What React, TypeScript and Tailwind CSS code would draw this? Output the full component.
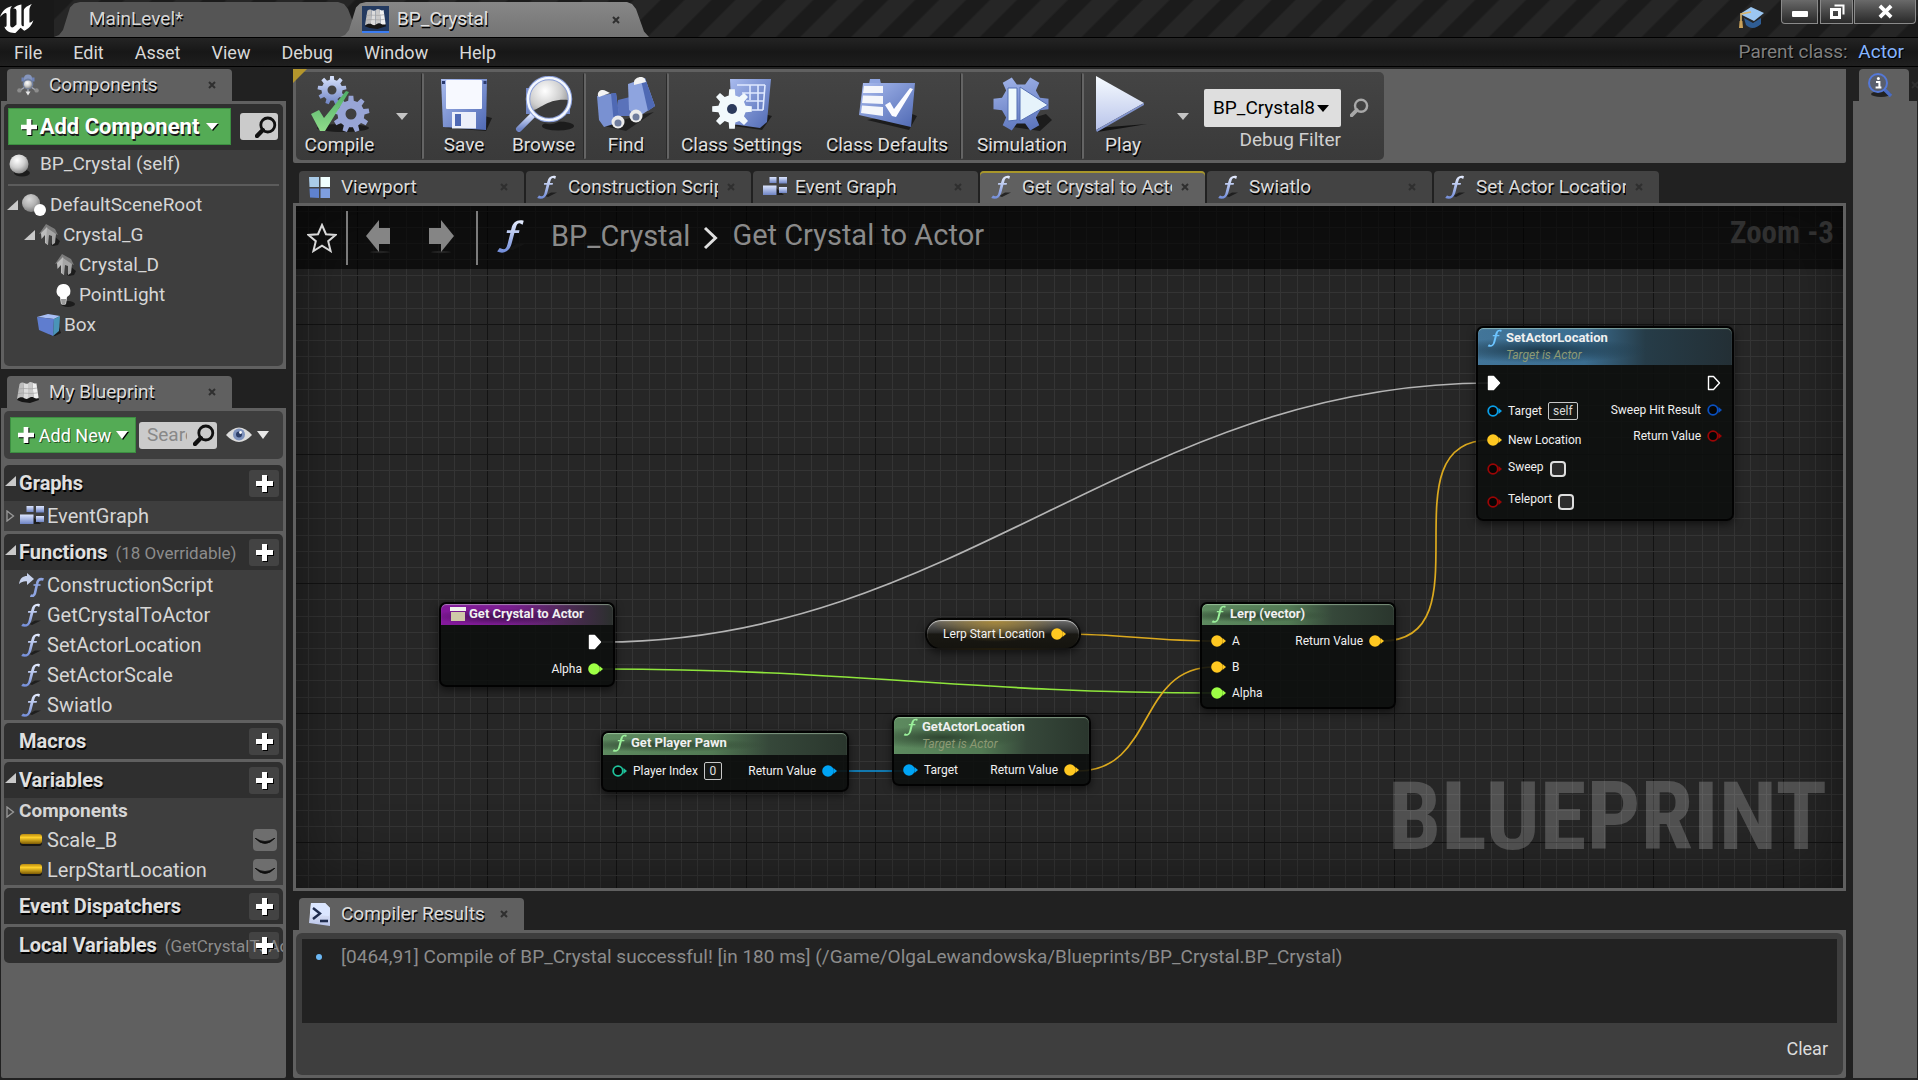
import React from "react";
import type { ReactNode } from "react";

/* ---------- icon helpers ---------- */

function gearPath(cx: number, cy: number, outer: number, inner: number, teeth: number) {
  const step = (Math.PI * 2) / teeth;
  const points: string[] = [];
  for (let i = 0; i < teeth; i++) {
    const a = i * step - Math.PI / 2;
    const add = (r: number, o: number) =>
      points.push(`${(cx + r * Math.cos(a + o * step)).toFixed(2)} ${(cy + r * Math.sin(a + o * step)).toFixed(2)}`);
    add(inner, -0.3);
    add(outer, -0.18);
    add(outer, 0.18);
    add(inner, 0.3);
  }
  return `M${points.join("L")}Z`;
}

function Gradients() {
  return (
    <svg className="absolute h-0 w-0" aria-hidden="true">
      <defs>
        <linearGradient id="steel" x1="0" y1="0" x2="0" y2="1">
          <stop offset="0" stopColor="#dbe5ff" />
          <stop offset="1" stopColor="#6f84c4" />
        </linearGradient>
        <linearGradient id="blue" x1="0" y1="0" x2="1" y2="1">
          <stop offset="0" stopColor="#a9bbee" />
          <stop offset="1" stopColor="#4f69b4" />
        </linearGradient>
        <linearGradient id="ice" x1="0" y1="0" x2="0" y2="1">
          <stop offset="0" stopColor="#f6fbff" />
          <stop offset="1" stopColor="#b9c4ea" />
        </linearGradient>
        <linearGradient id="fglyph" x1="0" y1="0" x2="0" y2="24" gradientUnits="userSpaceOnUse">
          <stop offset="0" stopColor="#eaf0ff" />
          <stop offset="1" stopColor="#6f8ad8" />
        </linearGradient>
        <linearGradient id="green" x1="0" y1="0" x2="0" y2="1">
          <stop offset="0" stopColor="#4fae68" />
          <stop offset="1" stopColor="#8fdc8a" />
        </linearGradient>
        <linearGradient id="gold" x1="0" y1="0" x2="0" y2="1">
          <stop offset="0" stopColor="#b98a10" />
          <stop offset="0.35" stopColor="#ffd02a" />
          <stop offset="1" stopColor="#7d5c06" />
        </linearGradient>
        <radialGradient id="ball" cx="0.4" cy="0.3" r="0.8">
          <stop offset="0" stopColor="#ffffff" />
          <stop offset="0.5" stopColor="#cfcfcf" />
          <stop offset="1" stopColor="#777777" />
        </radialGradient>
      </defs>
    </svg>
  );
}

function FIcon({ className = "h-6 w-6", color = "url(#fglyph)", shadow = true }: { className?: string; color?: string; shadow?: boolean }) {
  return (
    <svg viewBox="0 0 24 24" className={`shrink-0 ${className}`} fill="none" aria-hidden="true">
      {shadow && <path d="M10 21 L16 17.5 L22 17.5 L13 22 Z" fill="#161616" opacity="0.8" />}
      <path
        d="M21 1.2 C16.5 0 13.4 2.2 12.4 6.4 L12 8 H9.2 L8.9 9.8 H11.6 L9.6 17.6 C8.9 20.6 7.8 21.7 6 21.2 L4 20.4 L2.2 23 C6.8 25 10.8 23.2 12.4 17.4 L14.4 9.8 H17.6 L18 8 H14.9 L15.4 6.2 C16 3.6 16.9 2.8 18.2 3 L20.2 4 Z"
        fill={color}
      />
    </svg>
  );
}

function BookIcon({ className = "h-6 w-6" }: { className?: string }) {
  return (
    <svg viewBox="0 0 24 24" className={`shrink-0 ${className}`} aria-hidden="true">
      <path d="M1 20 L6 22 L14 23 L23 20 L22 17 H3 Z" fill="#161616" />
      <path d="M3.5 4 C5 2.4 6.5 2.2 8 3 L7.2 17.6 C5 17 3 17.6 1 19 Z" fill="#bdbdbd" />
      <path d="M8 3 C9.5 4 11 4 12 3.4 L12 18.6 C10.4 19.4 8.6 18.6 7.2 17.6 Z" fill="#dcdcdc" />
      <path d="M12 3.4 C13.5 1.8 15 1.6 16.4 2.6 L17.6 17.4 C15.6 16.6 13.6 17.4 12 18.6 Z" fill="#c9c9c9" />
      <path d="M16.4 2.6 C18 3.6 19 3.8 20.4 3.2 L22.6 18 C20.8 18.8 19 18.2 17.6 17.4 Z" fill="#f0f0f0" />
      <path d="M2.6 9 C8 7.4 14 10 21 8 M2 13.6 C8 12 14 14.6 21.8 12.8" stroke="#a2a2a2" strokeWidth="0.7" fill="none" />
    </svg>
  );
}

function ComponentsIcon() {
  return (
    <svg viewBox="0 0 24 24" className="h-6 w-6 shrink-0" aria-hidden="true">
      <path d="M12 12 L3 18 M12 12 L21 18 M12 12 V21" stroke="#a4a9b4" strokeWidth="1.5" />
      <path d="M5.5 4.5 H9 V8.5 H5.5 Z M15 4.5 H18.5 V8.5 H15 Z" fill="#6f83b8" />
      <circle cx="12" cy="5.5" r="4" fill="#8696bd" />
      <circle cx="12" cy="11" r="5.4" fill="#6f7f9f" />
      <circle cx="12" cy="11.5" r="4" fill="url(#ball)" />
      <circle cx="3.4" cy="17.4" r="2.2" fill="#8d8d8d" />
      <circle cx="20.6" cy="17.4" r="2.2" fill="#8d8d8d" />
      <path d="M9.5 18.5 H14.5 L12 22.5 Z" fill="#e8e8e8" />
    </svg>
  );
}

function GraphIcon() {
  return (
    <svg viewBox="0 0 26 24" className="h-6 w-[26px] shrink-0" aria-hidden="true">
      <path d="M14 13 L22 20 H12 Z" fill="#1c1c1c" />
      <rect x="7.5" y="2" width="7" height="6" fill="url(#steel)" />
      <rect x="17" y="2" width="8" height="6.5" fill="url(#steel)" />
      <rect x="1" y="10.5" width="13.5" height="9.5" fill="url(#steel)" />
      <rect x="17" y="12" width="8" height="6" fill="url(#steel)" />
    </svg>
  );
}

function ViewportIcon() {
  return (
    <svg viewBox="0 0 24 24" className="h-6 w-6 shrink-0" aria-hidden="true">
      <path d="M1 2 L11 2 V12 H1.5 Z" fill="#a9cbe8" />
      <path d="M12.5 2 H22 V12 H12.5 Z" fill="#f0ffff" />
      <path d="M1.5 13.5 H11 V23 L2 22.5 Z" fill="#5f82cf" />
      <path d="M12.5 13.5 H22 V23 H12.5 Z" fill="#7f9fe0" />
    </svg>
  );
}

function SearchGlyph({ className, color = "#111" }: { className: string; color?: string }) {
  return (
    <svg viewBox="0 0 22 22" className={`shrink-0 ${className}`} fill="none" stroke={color} aria-hidden="true">
      <circle cx="12.8" cy="9" r="7" strokeWidth="2.8" />
      <path d="M7.8 14 L2 20" strokeWidth="4.4" strokeLinecap="round" />
    </svg>
  );
}

function Caret({ className = "h-[7px] w-3", color = "#e8e8e8" }: { className?: string; color?: string }) {
  return (
    <svg viewBox="0 0 12 7" className={`shrink-0 ${className}`} preserveAspectRatio="none" aria-hidden="true">
      <path d="M0 0 H12 L6 7 Z" fill={color} />
    </svg>
  );
}

function PlusGlyph({ className = "h-[17px] w-[17px]" }: { className?: string }) {
  return (
    <svg viewBox="0 0 17 17" className={`shrink-0 drop-shadow-[1px_1px_0_#000] ${className}`} aria-hidden="true">
      <path d="M6 0 H11 V6 H17 V11 H11 V17 H6 V11 H0 V6 H6 Z" fill="#fff" />
    </svg>
  );
}

function Arrow({ open }: { open: boolean }) {
  return (
    <svg viewBox="0 0 12 12" className="h-3 w-3 shrink-0" aria-hidden="true">
      {open ? <path d="M11 1 V11 H0 Z" fill="#c9c9c9" /> : <path d="M2 1 L8.5 6 L2 11 Z" fill="none" stroke="#9a9a9a" strokeWidth="1.3" />}
    </svg>
  );
}

/* ---------- toolbar icons ---------- */

function CompileIcon() {
  return (
    <svg viewBox="0 0 60 56" className="h-14 w-[60px]" aria-hidden="true">
      <ellipse cx="33" cy="52" rx="26" ry="4" fill="#1c1c1c" />
      <path d={gearPath(22, 14, 14.5, 10.5, 9) + "M26.5 14a4.5 4.5 0 1 0-9 0a4.5 4.5 0 1 0 9 0Z"} fillRule="evenodd" fill="url(#steel)" />
      <path d={gearPath(41, 38, 18.5, 13.5, 9) + "M46.5 38a5.5 5.5 0 1 0-11 0a5.5 5.5 0 1 0 11 0Z"} fillRule="evenodd" fill="#98a5d6" />
      <path d="M1 38 L9 34 L14 42 L36 15 L39 16 L15 55 L10 55 Z" fill="url(#green)" />
    </svg>
  );
}

function SaveIcon() {
  return (
    <svg viewBox="0 0 60 56" className="h-14 w-[60px]" aria-hidden="true">
      <path d="M12 52 L52 55 L58 42 L50 40 Z" fill="#1c1c1c" />
      <path d="M7 3 H53 L52 54 L9 51 Z" fill="url(#blue)" />
      <rect x="12" y="4" width="36" height="29" rx="1" fill="#f7f9ff" />
      <rect x="18" y="36" width="24" height="16.5" fill="#eceffa" />
      <rect x="21" y="38" width="6" height="12" fill="#4f69b4" />
      <rect x="8" y="5" width="3" height="3" fill="#2b3a6e" />
      <rect x="49.5" y="5" width="3" height="3" fill="#2b3a6e" />
    </svg>
  );
}

function BrowseIcon() {
  return (
    <svg viewBox="0 0 60 56" className="h-14 w-[60px]" aria-hidden="true">
      <ellipse cx="44" cy="50" rx="16" ry="4.5" fill="#1c1c1c" />
      <rect x="12" y="12" width="44" height="26" fill="#7388c6" />
      <path d="M19 39 L5 53" stroke="url(#steel)" strokeWidth="6" strokeLinecap="round" />
      <circle cx="35" cy="23" r="20" fill="url(#ball)" />
      <path d="M17 34 C24 36 32 22 54 24 A19 19 0 0 1 17 34 Z" fill="#3a3a3a" />
      <circle cx="35" cy="23" r="21" fill="none" stroke="#8b9fd8" strokeWidth="4.5" />
      <circle cx="35" cy="23" r="21" fill="none" stroke="#f4f8ff" strokeWidth="2.5" />
    </svg>
  );
}

function FindIcon() {
  return (
    <svg viewBox="0 0 60 56" className="h-14 w-[60px]" aria-hidden="true">
      <path d="M8 50 L30 55 L58 36 L40 40 Z" fill="#222" />
      <path d="M22 24 L38 20 L38 40 L22 40 Z" fill="#5a72ba" />
      <path d="M1 20 L20 17 L24 46 L8 51 L3 44 Z" fill="#7991d2" />
      <path d="M32 8 L49 2 L59 30 L42 41 L33 34 Z" fill="#8ea4df" />
      <path d="M15 17.5 L20 17 L24 46 L18 48 Z" fill="#4f69b4" />
      <path d="M45 4 L49 2 L59 30 L52 35 Z" fill="#4f69b4" />
      <path d="M2 20 C1 14 7 13 10 15 L14 17 L3 21 Z" fill="#f3f3f3" />
      <path d="M38 6 C38 2 46 -1 49 3 L50 6 L38 9 Z" fill="#f3f3f3" />
      <circle cx="22" cy="46" r="6.5" fill="#ececec" />
      <circle cx="22" cy="47" r="3.5" fill="#707d9d" />
      <circle cx="40" cy="40" r="6.5" fill="#ececec" />
      <circle cx="40" cy="41" r="3.5" fill="#707d9d" />
    </svg>
  );
}

function ClassSettingsIcon() {
  return (
    <svg viewBox="0 0 60 56" className="h-14 w-[60px]" aria-hidden="true">
      <path d="M22 50 L50 54 L60 40 L52 38 Z" fill="#1c1c1c" />
      <path d="M18 3 H59 L55 46 L48 52 L20 48 Z" fill="url(#blue)" />
      <path d="M25 9 H53 M38 9 V24 M46 9 V34 M53 9 L51 34 M30 17 H53 M34 25 H52 M40 34 H51" stroke="#dfe9ff" strokeWidth="1.6" fill="none" />
      <path d={gearPath(20, 33, 20, 14, 8)} fill="#f2f9fc" />
      <circle cx="20" cy="33" r="5" fill="#2b3a5c" />
    </svg>
  );
}

function ClassDefaultsIcon() {
  return (
    <svg viewBox="0 0 60 56" className="h-14 w-[60px]" aria-hidden="true">
      <path d="M10 44 L52 54 L60 40 L50 36 Z" fill="#1c1c1c" />
      <path d="M13 3 H23 L24 8 H12 Z" fill="#8ea4df" />
      <path d="M6 7 H58 L54 51 L2 39 Z" fill="url(#blue)" />
      <path d="M7 10 L26 10 V17 L6 17 Z M6 19.5 L26 20 V28 L5 27 Z M5 29.5 L26 31 V40 L4 37 Z" fill="#f4f6fb" />
      <path d="M28 29 L33 26 L37 33 L53 12 L56 13 L39 41 L35 40 Z" fill="#fbfbff" />
    </svg>
  );
}

function SimulationIcon() {
  return (
    <svg viewBox="0 0 60 56" className="h-14 w-[60px]" aria-hidden="true">
      <path d="M14 50 L48 55 L60 44 L54 38 Z" fill="#1c1c1c" />
      <g transform="rotate(30 29 28)">
        <path d={gearPath(29, 28, 28, 20, 6)} fill="url(#blue)" />
      </g>
      <path d="M16 12 H25 V44 L16 45 Z" fill="#eef9fc" stroke="#5570b4" strokeWidth="1" />
      <path d="M28 11 L56 29 L28 45 Z" fill="#e6f3fb" stroke="#5570b4" strokeWidth="1" />
    </svg>
  );
}

function PlayIcon() {
  return (
    <svg viewBox="0 0 60 56" className="h-14 w-[60px]" aria-hidden="true">
      <path d="M4 56 L4 52 L54 48 L30 52 Z" fill="#141414" />
      <path d="M3 0 L51 27 L3 54 Z" fill="url(#ice)" />
      <path d="M3 54 L51 27 L51 29 L4 56 Z" fill="#8193cc" />
    </svg>
  );
}

/* ---------- shared chrome ---------- */

function CloseX({ label }: { label: string }) {
  return (
    <button aria-label={`Close ${label}`} className="flex h-4 w-[10px] shrink-0 items-center justify-center">
      <svg viewBox="0 0 8 8" className="h-2 w-2" aria-hidden="true">
        <path d="M1 1 L7 7 M7 1 L1 7" stroke="#2f2f2f" strokeWidth="2" />
      </svg>
    </button>
  );
}

function PanelTab({ icon, label, state = "open" }: { icon: ReactNode; label: string; state?: "open" | "idle" | "active" }) {
  const look =
    state === "idle"
      ? "bg-[#434343]"
      : state === "active"
        ? "bg-[#606060] shadow-[inset_0_2px_0_#a8962a]"
        : "bg-[#606060]";
  return (
    <div className={`flex h-8 w-[225px] shrink-0 items-center rounded-t-[4px] pr-[15px] pl-[9px] ${look}`}>
      <span className="flex w-[33px] shrink-0 items-center">{icon}</span>
      <button className="mr-2 min-w-0 flex-1 overflow-hidden text-left whitespace-nowrap text-[#dcdcdc] [text-shadow:1px_2px_0_#000]">
        {label}
      </button>
      <CloseX label={label} />
    </div>
  );
}

const menuItems = ["File", "Edit", "Asset", "View", "Debug", "Window", "Help"];

function TitleBar() {
  return (
    <header className="flex h-[37px] shrink-0 items-start bg-[repeating-linear-gradient(135deg,#1b1b1b_0px,#1b1b1b_15px,#262626_17px,#262626_34px,#1b1b1b_36px)]">
      <div className="flex h-full w-[54px] shrink-0 items-center bg-[#191919]">
        <svg viewBox="0 0 36 30" className="h-[30px] w-9" aria-label="Unreal Engine" role="img">
          <path
            d="M0 13 C2 7 6 3.5 12 2 C10.5 4 10.2 5 10.2 7 V21 C10.2 23 12 24.2 13.6 23 L16.5 20.4 V7 C16.5 4.6 14.8 4 13.2 4.6 C15.6 2.2 18.4 1 21.4 0.6 V19.6 C21.4 21.8 22.4 22.8 23.8 22 V7 C23.8 4.8 25.4 2.6 31.8 0 C29.6 3 29.4 4.6 29.4 7 V18.6 C30.8 18.6 32 17.8 33.4 16.2 C32 21.4 28.4 24.8 24.2 26.8 L20.6 23.8 L15.4 29 C10 29.4 5.4 27 4.4 22.6 C5.6 23.4 6.6 22.6 6.6 21 V10.4 C6.6 8.4 4.4 8 0 13 Z"
            fill="#fff"
          />
        </svg>
      </div>
      <div className="mt-[2px] flex h-[35px] w-[298px] items-center bg-[#555] pl-[35px] [clip-path:polygon(0_100%,5px_94%,9px_80%,16px_16%,20px_4%,26px_0,calc(100%-14px)_0,calc(100%-8px)_6%,calc(100%-4px)_20%,100%_50%,100%_100%)]">
        <button className="text-[#d6d6d6] [text-shadow:1px_2px_0_#000]">MainLevel*</button>
      </div>
      <div className="mt-[2px] -ml-3 flex h-[35px] w-[309px] items-center bg-linear-to-b from-[#878787] to-[#747474] pr-7 pl-[22px] [clip-path:polygon(0_100%,5px_94%,9px_80%,16px_16%,20px_4%,26px_0,calc(100%-22px)_0,calc(100%-17px)_6%,calc(100%-13px)_20%,calc(100%-5px)_84%,100%_100%)]">
        <span className="mr-2 flex border-b-2 border-[#3b7cf0] bg-[#233a60] p-[1px]">
          <BookIcon className="h-[23px] w-[25px]" />
        </span>
        <button className="flex-1 text-left text-[#e2e2e2] [text-shadow:1px_2px_0_#000]">BP_Crystal</button>
        <CloseX label="BP_Crystal" />
      </div>
      <div className="ml-auto flex items-start">
        <svg viewBox="0 0 28 24" className="mt-[6px] mr-4 h-6 w-7" aria-label="Tutorials" role="img">
          <path d="M7 12 L16 17 L24 12 V18 C20 22 14 24 9 19 Z" fill="#2f5d94" />
          <path d="M14 1 L27 7 L17 15 L3 8 Z" fill="#9cc7f2" />
          <path d="M14 6 L4 8 V20" stroke="#d8b36a" strokeWidth="1.6" fill="none" />
          <path d="M2.6 15 H5.4 L6 22 H2 Z" fill="#caa25a" />
        </svg>
        <div className="flex text-white">
          <button aria-label="Minimize" className="flex h-6 w-[37px] items-center justify-center rounded-bl-[4px] border border-t-0 border-[#8a8a8a] bg-linear-to-b from-[#6a6a6a] to-[#2a2a2a]">
            <span className="mt-1 h-[6px] w-4 rounded-[1px] bg-white" />
          </button>
          <button aria-label="Restore" className="ml-[2px] flex h-6 w-[33px] items-center justify-center border border-t-0 border-[#8a8a8a] bg-linear-to-b from-[#6a6a6a] to-[#2a2a2a]">
            <svg viewBox="0 0 16 16" className="h-4 w-4" fill="none" stroke="#fff" aria-hidden="true">
              <path d="M5.5 1.5 H14.5 V10.5" strokeWidth="2" />
              <rect x="2.5" y="5.5" width="8" height="8" strokeWidth="3" />
            </svg>
          </button>
          <button aria-label="Close" className="mr-[2px] ml-[1px] flex h-6 w-[62px] items-center justify-center rounded-br-[4px] border border-t-0 border-[#8a8a8a] bg-linear-to-b from-[#6a6a6a] to-[#2a2a2a]">
            <svg viewBox="0 0 16 16" className="h-[15px] w-[17px]" aria-hidden="true">
              <path d="M2 2 L14 14 M14 2 L2 14" stroke="#fff" strokeWidth="4" />
            </svg>
          </button>
        </div>
      </div>
    </header>
  );
}

function MenuBar() {
  return (
    <nav className="flex h-[30px] shrink-0 items-center gap-[31px] border-y border-black bg-linear-to-b from-[#242424] via-[#171717] to-[#1f1f1f] px-[14px] text-[18px] text-[#d8d8d8]">
      {menuItems.map((item) => (
        <button key={item}>{item}</button>
      ))}
      <span className="ml-auto text-[19px] text-[#808080] [text-shadow:1px_1px_0_#000]">
        Parent class:{" "}
        <a href="#actor" className="ml-[6px] text-[#85b5ff]">
          Actor
        </a>
      </span>
    </nav>
  );
}

/* ---------- left column ---------- */

function HouseIcon() {
  return (
    <svg viewBox="0 0 22 24" className="h-6 w-[22px] shrink-0" aria-hidden="true">
      <path d="M13 22 L17 14 L22 18 L20 22 L15 23 Z" fill="#1c1c1c" />
      <path d="M1 11 L8 1 L17 6 L20 12 L10 8 Z" fill="#7b7b7b" />
      <path d="M3 10 L9 4 L10 8 V22 L7 20 V12 L3.5 16 Z" fill="#bcbcbc" />
      <path d="M9 5 L18 11 L17 20 L14 22 V13 L11 12 L10 22 L8 20 Z" fill="#a5a5a5" />
    </svg>
  );
}

function SceneRootIcon() {
  return (
    <svg viewBox="0 0 26 24" className="h-6 w-[26px] shrink-0" aria-hidden="true">
      <circle cx="10" cy="10" r="9" fill="url(#ball)" opacity="0.8" />
      <circle cx="19" cy="17" r="6" fill="#fff" />
    </svg>
  );
}

function BulbIcon() {
  return (
    <svg viewBox="0 0 22 24" className="h-6 w-[22px] shrink-0" aria-hidden="true">
      <ellipse cx="14" cy="21" rx="7" ry="3" fill="#1c1c1c" />
      <path d="M9 1 A7 7 0 0 1 13 14 L12 21 H7 L6 14 A7 7 0 0 1 9 1 Z" fill="#fff" />
      <path d="M7 16 H12 L11.5 22 H7.5 Z" fill="#9a9a9a" />
    </svg>
  );
}

function BoxIcon() {
  return (
    <svg viewBox="0 0 24 24" className="h-6 w-6 shrink-0" aria-hidden="true">
      <path d="M12 22 L22 14 L24 20 L18 23 Z" fill="#1c1c1c" />
      <path d="M0 4 L11 1 L23 3 L17 6 Z" fill="#a9bff5" />
      <path d="M0 4 L17 6 L16 23 L2 17 Z" fill="#5f7dcf" />
      <path d="M17 6 L23 3 L22 18 L16 23 Z" fill="#4a94b8" />
    </svg>
  );
}

function TreeRow({ indent, open, icon, label }: { indent: string; open?: boolean; icon: ReactNode; label: string }) {
  return (
    <li className={`flex h-[30px] items-center ${indent}`}>
      <span className="w-[14px] shrink-0">{open && <Arrow open />}</span>
      {icon}
      <span className="ml-[3px]">{label}</span>
    </li>
  );
}

function ComponentsPanel() {
  return (
    <section className="flex shrink-0 flex-col">
      <div className="pl-[6px]">
        <PanelTab icon={<ComponentsIcon />} label="Components" />
      </div>
      <div className="bg-[#606060] p-[3px]">
        <div className="h-[262px] overflow-hidden rounded-[5px] bg-[#3e3e3e] text-[#d6d6d6]">
          <div className="flex h-[46px] items-center justify-between bg-[#2f2f2f] pr-[5px] pb-px pl-1">
            <button className="flex h-[37px] w-[223px] items-center justify-center gap-[3px] border border-[#3c8f41] bg-[#54ab55] text-[22px] font-bold text-white [text-shadow:1px_2px_0_#1a1a1a]">
              <PlusGlyph className="h-4 w-4" />
              Add Component
              <Caret className="ml-1 h-[7px] w-3 drop-shadow-[1px_1px_0_#000]" color="#fff" />
            </button>
            <button aria-label="Search components" className="flex h-[27px] w-[38px] items-center justify-end rounded-[3px] bg-[#cbcbcb] pr-[1px]">
              <SearchGlyph className="h-[22px] w-[22px]" />
            </button>
          </div>
          <div className="flex h-[29px] items-center pl-1">
            <svg viewBox="0 0 22 24" className="h-6 w-[22px]" aria-hidden="true">
              <ellipse cx="14" cy="20" rx="8" ry="3.5" fill="#1c1c1c" />
              <circle cx="11" cy="11" r="9.5" fill="url(#ball)" />
            </svg>
            <span className="ml-[10px]">BP_Crystal (self)</span>
          </div>
          <hr className="mx-1 mt-[5px] mb-[4px] border-t-2 border-[#5c5c5c]" />
          <ul>
            <TreeRow indent="pl-[3px]" open icon={<SceneRootIcon />} label="DefaultSceneRoot" />
            <TreeRow indent="pl-[20px]" open icon={<HouseIcon />} label="Crystal_G" />
            <TreeRow indent="pl-[36px]" icon={<HouseIcon />} label="Crystal_D" />
            <TreeRow indent="pl-[36px]" icon={<BulbIcon />} label="PointLight" />
            <TreeRow indent="pl-[19px]" icon={<BoxIcon />} label="Box" />
          </ul>
        </div>
      </div>
    </section>
  );
}

function SectionHead({ title, note, open }: { title: string; note?: string; open?: boolean }) {
  return (
    <div className="relative flex h-9 items-center overflow-hidden rounded-t-[5px] bg-[#2f2f2f]">
      <span className="w-[15px] shrink-0 pb-1 pl-px">{open && <Arrow open />}</span>
      <h2 className="text-[20px] font-bold whitespace-nowrap text-[#e0e0e0] [text-shadow:1px_2px_0_#000]">{title}</h2>
      {note && <span className="ml-2 pt-1 text-[17px] whitespace-nowrap text-[#8c8c8c]">{note}</span>}
      <button aria-label={`Add to ${title}`} className="absolute top-[5px] right-[4px] flex h-[27px] w-[30px] items-center justify-center rounded-[3px] bg-[#808080]/25">
        <PlusGlyph />
      </button>
    </div>
  );
}

function FunctionRow({ label, icon }: { label: string; icon?: ReactNode }) {
  return (
    <li className="flex h-[30px] items-center pl-[15px]">
      <span className="flex w-[28px] shrink-0">{icon ?? <FIcon />}</span>
      {label}
    </li>
  );
}

function VariableRow({ label }: { label: string }) {
  return (
    <li className="flex h-[30px] items-center pr-[6px] pl-[15px]">
      <svg viewBox="0 0 24 12" className="mr-1 h-3 w-6 shrink-0" aria-hidden="true">
        <rect x="1" y="3" width="22" height="9" rx="3" fill="#161616" />
        <rect x="1" y="0" width="22" height="10" rx="3" fill="url(#gold)" />
      </svg>
      <span className="flex-1">{label}</span>
      <button aria-label={`Toggle visibility of ${label}`} className="flex h-[22px] w-6 items-center justify-center rounded-[4px] bg-[#6e6e6e]">
        <svg viewBox="0 0 20 8" className="mt-1 h-2 w-5" aria-hidden="true">
          <path d="M0 0 Q10 11 20 0 Q10 7 0 0 Z" fill="#0c0c0c" stroke="#0c0c0c" strokeWidth="0.8" />
        </svg>
      </button>
    </li>
  );
}

function MyBlueprintPanel() {
  return (
    <section className="flex min-h-0 flex-1 flex-col">
      <div className="pl-[6px]">
        <PanelTab icon={<BookIcon />} label="My Blueprint" />
      </div>
      <div className="flex flex-1 flex-col gap-[3px] rounded-b-[2px] bg-[#606060] p-[3px] text-[20px] text-[#d6d6d6]">
        <div className="mb-[3px] flex h-12 items-center rounded-[5px] bg-[#3e3e3e] pl-[6px]">
          <button className="flex h-9 w-[126px] items-center justify-center gap-[5px] border border-[#3c8f41] bg-[#54ab55] text-[18px] text-white [text-shadow:1px_1px_0_#2a5a2a]">
            <PlusGlyph className="h-4 w-4" />
            Add New
            <Caret className="h-2 w-3 drop-shadow-[1px_1px_0_#000]" color="#fff" />
          </button>
          <label className="ml-[3px] flex h-[27px] w-[78px] items-center rounded-[3px] bg-[#cbcbcb] pl-2">
            <input aria-label="Search" placeholder="Search" className="w-10 bg-transparent text-[19px] outline-none placeholder:text-[#888]" />
            <SearchGlyph className="ml-[6px] h-[22px] w-[22px]" />
          </label>
          <button aria-label="View options" className="ml-[9px] flex items-center gap-[5px]">
            <svg viewBox="0 0 26 16" className="h-4 w-[26px]" aria-hidden="true">
              <path d="M0 8 Q13 -7 26 8 Q13 22 0 8 Z" fill="#dcdcdc" />
              <circle cx="13" cy="7.5" r="6" fill="#7f93bd" />
              <circle cx="13" cy="7.5" r="3" fill="#2c3d66" />
              <circle cx="14.5" cy="5.5" r="1.4" fill="#fff" />
            </svg>
            <Caret className="h-2 w-3" />
          </button>
        </div>
        <div>
          <SectionHead title="Graphs" open />
          <div className="flex h-[30px] items-center bg-[#3e3e3e] pl-px">
            <span className="w-[14px]">
              <Arrow open={false} />
            </span>
            <GraphIcon />
            <span className="ml-[2px]">EventGraph</span>
          </div>
        </div>
        <div>
          <SectionHead title="Functions" note="(18 Overridable)" open />
          <ul className="bg-[#3e3e3e]">
            <FunctionRow
              label="ConstructionScript"
              icon={
                <svg viewBox="0 0 26 24" className="h-6 w-[26px]" fill="none" aria-hidden="true">
                  <path d="M0 11 C1 5 4 3 8 3 V0 L15 6 L8 12 V8.5 C5 8 2.5 9 0 11 Z" fill="#c8d3ee" />
                  <path d="M24.5 6.5 C20 5 18.5 8 18 11 L16 20 C15.5 22.5 13.5 23.5 11.5 22.5" stroke="#8fa5e2" strokeWidth="2.6" />
                  <path d="M14.5 12 H21.5" stroke="#8fa5e2" strokeWidth="1.6" />
                </svg>
              }
            />
            <FunctionRow label="GetCrystalToActor" />
            <FunctionRow label="SetActorLocation" />
            <FunctionRow label="SetActorScale" />
            <FunctionRow label="Swiatlo" />
          </ul>
        </div>
        <SectionHead title="Macros" />
        <div>
          <SectionHead title="Variables" open />
          <ul className="bg-[#3e3e3e]">
            <li className="flex h-[27px] items-center pl-px text-[19px] font-bold">
              <span className="w-[14px]">
                <Arrow open={false} />
              </span>
              Components
            </li>
            <VariableRow label="Scale_B" />
            <VariableRow label="LerpStartLocation" />
          </ul>
        </div>
        <SectionHead title="Event Dispatchers" />
        <div className="overflow-hidden rounded-b-[5px]">
          <SectionHead title="Local Variables" note="(GetCrystalToActor)" />
        </div>
      </div>
    </section>
  );
}

/* ---------- toolbar ---------- */

function Tool({ width, icon, label }: { width: string; icon: ReactNode; label: string }) {
  return (
    <button className={`flex flex-col items-center pt-1 ${width}`}>
      {icon}
      <span className="leading-[26px] whitespace-nowrap text-[#e0e0e0] [text-shadow:1px_2px_0_#000]">{label}</span>
    </button>
  );
}

function Divider() {
  return <span className="my-px w-[3px] shrink-0 rounded-full border-l border-[#2a2a2a] bg-[#646464]" />;
}

function Toolbar() {
  return (
    <div className="relative shrink-0 rounded-b-[2px] bg-[#606060] p-[3px]">
      <div className="flex h-[88px] w-fit rounded-[5px] bg-linear-to-b from-[#444] to-[#3a3a3a]">
        <Tool width="w-[87px]" icon={<CompileIcon />} label="Compile" />
        <button aria-label="Compile options" className="flex w-[38px] items-center justify-center">
          <Caret color="#c4c4c4" />
        </button>
        <Divider />
        <Tool width="w-20" icon={<SaveIcon />} label="Save" />
        <Tool width="w-[79px]" icon={<BrowseIcon />} label="Browse" />
        <Divider />
        <Tool width="w-20" icon={<FindIcon />} label="Find" />
        <Divider />
        <Tool width="w-[145px]" icon={<ClassSettingsIcon />} label="Class Settings" />
        <Tool width="w-[146px]" icon={<ClassDefaultsIcon />} label="Class Defaults" />
        <Divider />
        <Tool width="w-[118px]" icon={<SimulationIcon />} label="Simulation" />
        <Divider />
        <Tool width="w-[78px]" icon={<PlayIcon />} label="Play" />
        <button aria-label="Play options" className="flex w-[42px] items-center justify-center">
          <Caret color="#c4c4c4" />
        </button>
        <div className="flex flex-col items-end pt-[17px]">
          <span className="relative flex items-center">
            <select
              id="debug-filter"
              defaultValue="BP_Crystal8"
              className="h-[38px] w-[137px] appearance-none rounded-[2px] bg-[#dedede] pl-[9px] text-black"
            >
              <option>BP_Crystal8</option>
            </select>
            <span className="pointer-events-none absolute right-3">
              <Caret color="#000" />
            </span>
          </span>
          <label htmlFor="debug-filter" className="leading-[26px] text-[#d0d0d0]">
            Debug Filter
          </label>
        </div>
        <button aria-label="Find debug object" className="mt-[26px] mr-[15px] ml-[9px] h-[19px]">
          <SearchGlyph className="h-[19px] w-[19px]" color="#a8a8a8" />
        </button>
      </div>
      <span className="absolute top-0 left-0 h-[14px] w-[14px] bg-[#b4962c] [clip-path:polygon(0_0,100%_0,0_100%)]" />
    </div>
  );
}

/* ---------- graph ---------- */

type PinKind = "exec" | "data";

function Pin({ color, filled = true, kind = "data" }: { color: string; filled?: boolean; kind?: PinKind }) {
  if (kind === "exec") {
    return (
      <svg viewBox="0 0 15 16" className="h-4 w-[15px] shrink-0" aria-hidden="true">
        <path d="M1.5 1.5 H6.5 L12.5 8 L6.5 14.5 H1.5 Z" fill={filled ? color : "none"} stroke={color} strokeWidth="1.4" strokeLinejoin="round" />
      </svg>
    );
  }
  return (
    <svg viewBox="0 0 15 12" className="h-3 w-[15px] shrink-0" aria-hidden="true">
      <circle cx="6" cy="6" r={filled ? 5.8 : 4.8} fill={filled ? color : "#050505"} stroke={color} strokeWidth={filled ? 0 : 1.8} />
      <path d="M11.5 3 L15 6 L11.5 9 Z" fill={color} />
    </svg>
  );
}

function PinRow({ side, pin, label, height = "h-[26px]", children }: { side: "in" | "out"; pin: ReactNode; label?: string; height?: string; children?: ReactNode }) {
  return (
    <div className={`flex items-center gap-[6px] whitespace-nowrap ${height} ${side === "out" ? "flex-row-reverse" : ""}`}>
      {pin}
      {label && <span>{label}</span>}
      {children}
    </div>
  );
}

function PinCheckbox({ id, label }: { id: string; label: string }) {
  return (
    <>
      <label htmlFor={id} className="pb-[5px]">
        {label}
      </label>
      <input id={id} type="checkbox" className="h-4 w-4 appearance-none rounded-[4px] border-2 border-[#dedede] bg-[#2c2c2c]" />
    </>
  );
}

const headTone = {
  purple: "bg-[radial-gradient(ellipse_at_35%_60%,#3f0d4c_0%,transparent_45%),linear-gradient(90deg,#84189c_0%,#7a1e90_40%,#4a2a52_75%,#2b302d_100%)]",
  green: "bg-[radial-gradient(ellipse_at_25%_55%,#2f4531_0%,transparent_40%),linear-gradient(90deg,#5d8a5f_0%,#527a54_45%,#36483a_68%,#2a362d_100%)]",
  blue: "bg-[radial-gradient(ellipse_at_25%_60%,#1d3a4c_0%,transparent_40%),linear-gradient(90deg,#427599_0%,#3b6d90_42%,#263c48_66%,#232f35_100%)]",
};

interface NodeProps {
  place: string;
  tone: keyof typeof headTone;
  icon: ReactNode;
  title: string;
  subtitle?: string;
  headHeight: string;
  body: string;
  inputs?: ReactNode;
  outputs?: ReactNode;
}

function GraphNode({ place, tone, icon, title, subtitle, headHeight, body, inputs, outputs }: NodeProps) {
  return (
    <article className={`absolute overflow-hidden rounded-[7px] border-2 border-black/80 bg-[#0d100e]/90 text-[12px] text-[#f0f0f0] shadow-[0_3px_8px_rgba(0,0,0,0.55)] ${place}`}>
      <div className={`flex items-start rounded-t-[5px] pl-[9px] shadow-[inset_0_1px_1px_rgba(220,255,220,0.45)] ${headHeight} ${headTone[tone]}`}>
        <span className="mt-px mr-[3px] flex w-4 shrink-0 justify-center">{icon}</span>
        <div className="pt-[2px] whitespace-nowrap">
          <h3 className="text-[13px] leading-4 font-bold">{title}</h3>
          {subtitle && <p className="leading-[18px] text-[#8d9a74] italic">{subtitle}</p>}
        </div>
      </div>
      <div className={`flex justify-between pr-[10px] pl-[9px] ${body}`}>
        <div>{inputs}</div>
        <div>{outputs}</div>
      </div>
    </article>
  );
}

const yellow = "#ffc821";
const lime = "#9eff45";
const azure = "#00a4f5";

const wires = [
  { x1: 306, y1: 436, x2: 1194, y2: 177, ease: 0.4, color: "#b4b4b4" },
  { x1: 306, y1: 463, x2: 918, y2: 487, ease: 0.4, color: "#8fe63c" },
  { x1: 766, y1: 428, x2: 918, y2: 435, ease: 0.4, color: "#dba91e" },
  { x1: 782, y1: 565, x2: 918, y2: 461, ease: 0.57, color: "#dba91e" },
  { x1: 1086, y1: 435, x2: 1194, y2: 234, ease: 1, color: "#dba91e" },
  { x1: 540, y1: 565, x2: 610, y2: 565, ease: 0.4, color: "#0c94dc" },
];

function GridAndWires() {
  const columns = Array.from({ length: 200 }, (_, i) => ({ at: Math.round(61 + (i - 6) * 16.2), major: i % 8 === 6 }));
  const rows = Array.from({ length: 90 }, (_, i) => ({ at: Math.round(118 + (i - 7) * 16.2), major: i % 8 === 7 }));
  const ordered = <T extends { major: boolean }>(lines: T[]) => [...lines.filter((l) => !l.major), ...lines.filter((l) => l.major)];
  return (
    <svg className="absolute inset-0 h-full w-full" aria-hidden="true">
      <g shapeRendering="crispEdges">
        {ordered(columns).map((l) => (
          <rect key={`c${l.at}`} x={l.at} y="0" width="1" height="3000" fill={l.major ? "#131313" : "#343434"} />
        ))}
        {ordered(rows).map((l) => (
          <rect key={`r${l.at}`} x="0" y={l.at} width="5000" height="1" fill={l.major ? "#131313" : "#343434"} />
        ))}
      </g>
      {wires.map((w) => {
        const reach = (w.x2 - w.x1) * w.ease;
        return (
          <path
            key={`${w.x1}-${w.y1}`}
            d={`M${w.x1} ${w.y1} C${w.x1 + reach} ${w.y1} ${w.x2 - reach} ${w.y2} ${w.x2} ${w.y2}`}
            stroke={w.color}
            strokeWidth="1.7"
            fill="none"
          />
        );
      })}
    </svg>
  );
}

function Canvas() {
  const greenF = <FIcon className="h-[18px] w-[18px]" color="#9af09a" shadow={false} />;
  const blueF = <FIcon className="h-[18px] w-[18px]" color="#6cc4ff" shadow={false} />;
  return (
    <div className="absolute inset-0 overflow-hidden bg-[#262626]">
      <GridAndWires />
      <div className="absolute inset-0 shadow-[inset_0_0_70px_rgba(0,0,0,0.5)]" />
      <p className="absolute right-4 bottom-6 font-['Roboto_Condensed','Roboto',sans-serif] text-[95px] leading-none font-bold text-white/20">BLUEPRINT</p>

      <GraphNode
        place="left-[143px] top-[396px] w-[176px]"
        tone="purple"
        icon={
          <svg viewBox="0 0 16 16" className="mt-px h-4 w-4" aria-hidden="true">
            <rect x="0" y="1" width="16" height="4" fill="#f2f2ee" />
            <rect x="1" y="6" width="14" height="9" fill="#cfc9a8" />
          </svg>
        }
        title="Get Crystal to Actor"
        headHeight="h-[21px]"
        body="pt-1 pb-[3px]"
        outputs={
          <>
            <PinRow side="out" pin={<Pin kind="exec" color="#fff" />} />
            <PinRow side="out" height="h-[27px]" pin={<Pin color={lime} />} label="Alpha" />
          </>
        }
      />
      <GraphNode
        place="left-[305px] top-[525px] w-[248px]"
        tone="green"
        icon={greenF}
        title="Get Player Pawn"
        headHeight="h-[22px]"
        body="pt-[3px] pb-[6px]"
        inputs={
          <PinRow side="in" pin={<Pin color="#1fc29b" filled={false} />} label="Player Index">
            <input aria-label="Player Index" defaultValue="0" className="h-[18px] w-[18px] rounded-[2px] border border-[#c8c8c8] bg-[#161816] text-center text-[12px] text-[#e0e0e0] outline-none" />
          </PinRow>
        }
        outputs={<PinRow side="out" pin={<Pin color={azure} />} label="Return Value" />}
      />
      <GraphNode
        place="left-[596px] top-[509px] w-[199px]"
        tone="green"
        icon={greenF}
        title="GetActorLocation"
        subtitle="Target is Actor"
        headHeight="h-[37px]"
        body="pt-[3px] pb-px"
        inputs={<PinRow side="in" pin={<Pin color={azure} />} label="Target" />}
        outputs={<PinRow side="out" pin={<Pin color={yellow} />} label="Return Value" />}
      />
      <article className="absolute top-[412px] left-[629px] flex h-8 w-[156px] items-center justify-end gap-[6px] rounded-full border-2 border-black/80 bg-[radial-gradient(ellipse_at_45%_0%,#a98a3a_0%,transparent_55%),linear-gradient(180deg,#6e6e6e_0%,#2a2a28_45%,#191813_50%,#15140f_100%)] pr-[13px] text-[12px] text-[#f4f4f4] shadow-[0_3px_8px_rgba(0,0,0,0.55),inset_0_1px_1px_rgba(255,255,255,0.7)]">
        Lerp Start Location
        <Pin color={yellow} />
      </article>
      <GraphNode
        place="left-[904px] top-[396px] w-[196px]"
        tone="green"
        icon={greenF}
        title="Lerp (vector)"
        headHeight="h-[21px]"
        body="pt-[3px] pb-px"
        inputs={
          <>
            <PinRow side="in" pin={<Pin color={yellow} />} label="A" />
            <PinRow side="in" pin={<Pin color={yellow} />} label="B" />
            <PinRow side="in" pin={<Pin color={lime} />} label="Alpha" />
          </>
        }
        outputs={<PinRow side="out" pin={<Pin color={yellow} />} label="Return Value" />}
      />
      <GraphNode
        place="left-[1180px] top-[120px] w-[258px]"
        tone="blue"
        icon={blueF}
        title="SetActorLocation"
        subtitle="Target is Actor"
        headHeight="h-[37px]"
        body="pt-[5px]"
        inputs={
          <>
            <PinRow side="in" pin={<Pin kind="exec" color="#fff" />} />
            <PinRow side="in" height="h-[30px]" pin={<Pin color="#0a9fe8" filled={false} />} label="Target">
              <span className="flex h-[18px] items-center rounded-[2px] border border-[#c8c8c8] bg-[#161816] px-1 text-[#d8d8d8]">self</span>
            </PinRow>
            <PinRow side="in" height="h-[28px]" pin={<Pin color={yellow} />} label="New Location" />
            <PinRow side="in" height="h-[30px]" pin={<Pin color="#9b0505" filled={false} />}>
              <PinCheckbox id="sweep" label="Sweep" />
            </PinRow>
            <PinRow side="in" height="h-[35px]" pin={<Pin color="#9b0505" filled={false} />}>
              <PinCheckbox id="teleport" label="Teleport" />
            </PinRow>
          </>
        }
        outputs={
          <>
            <PinRow side="out" pin={<Pin kind="exec" color="#fff" filled={false} />} />
            <PinRow side="out" height="h-[27px]" pin={<Pin color="#0a50c0" filled={false} />} label="Sweep Hit Result" />
            <PinRow side="out" pin={<Pin color="#9b0505" filled={false} />} label="Return Value" />
          </>
        }
      />
    </div>
  );
}

function Breadcrumbs() {
  return (
    <div className="relative flex h-[63px] items-center bg-black/60 pl-[11px] text-[29px] text-[#8a8a8a]">
      <button aria-label="Favorite">
        <svg viewBox="0 0 30 30" className="h-[30px] w-[30px]" fill="none" stroke="#d8d8d8" strokeWidth="2" aria-hidden="true">
          <path d="M15 2 L19 11.2 L28.5 12 L21.2 18.2 L23.6 28 L15 22.6 L6.4 28 L8.8 18.2 L1.5 12 L11 11.2 Z" />
        </svg>
      </button>
      <span className="ml-[9px] h-[54px] w-[2px] bg-[#7c7c7c]" />
      <button aria-label="Back" className="mb-1 ml-[17px]">
        <svg viewBox="0 0 26 36" className="h-9 w-[26px]" aria-hidden="true">
          <ellipse cx="15" cy="34" rx="10" ry="1.2" fill="#232323" />
          <path d="M1 18 L14 2 V10 H25 V26 H14 V34 Z" fill="#858585" />
        </svg>
      </button>
      <button aria-label="Forward" className="mb-1 ml-[37px]">
        <svg viewBox="0 0 26 36" className="h-9 w-[26px]" aria-hidden="true">
          <ellipse cx="13" cy="34" rx="10" ry="1.2" fill="#232323" />
          <path d="M26 18 L13 2 V10 H1 V26 H13 V34 Z" fill="#858585" />
        </svg>
      </button>
      <span className="ml-[22px] h-[54px] w-[2px] bg-[#7c7c7c]" />
      <FIcon className="mb-1 ml-[16px] h-9 w-[34px]" />
      <button className="mb-[2px] ml-[23px]">BP_Crystal</button>
      <svg viewBox="0 0 16 24" className="mx-[13px] h-6 w-4" fill="none" stroke="#e0e0e0" strokeWidth="3" aria-hidden="true">
        <path d="M2 2 L12.5 12 L2 22" />
      </svg>
      <button className="mb-1">Get Crystal to Actor</button>
      <span className="mr-[9px] mb-2 ml-auto font-['Roboto_Condensed','Roboto',sans-serif] text-[31px] font-bold text-[#303030]">Zoom -3</span>
    </div>
  );
}

function CompilerResults() {
  return (
    <section className="shrink-0">
      <div className="pl-[6px]">
        <PanelTab
          icon={
            <svg viewBox="0 0 24 24" className="h-6 w-6" aria-hidden="true">
              <path d="M3 1 H17 L22 6 V24 L1 21 Z" fill="url(#ice)" />
              <path d="M3 1 H17 L22 6 L21 14 L2 12 Z" fill="#dbe6ff" />
              <path d="M5 6 L12 11.5 L5 17" stroke="#1f2c4e" strokeWidth="2.4" fill="none" />
              <path d="M12 19 H20" stroke="#1f2c4e" strokeWidth="2.6" />
            </svg>
          }
          label="Compiler Results"
        />
      </div>
      <div className="rounded-b-[2px] bg-[#606060] p-[3px]">
        <div className="rounded-[6px] bg-[#3e3e3e] px-[6px] pt-[6px]">
          <ul className="h-[84px] bg-[#222] pt-1 pl-[14px]">
            <li className="flex h-7 items-center text-[#8c8c8c]">
              <span className="mr-[19px] h-[6px] w-[6px] rounded-full bg-[#6cb8f5]" />
              [0464,91] Compile of BP_Crystal successful! [in 180 ms] (/Game/OlgaLewandowska/Blueprints/BP_Crystal.BP_Crystal)
            </li>
          </ul>
          <div className="flex h-[52px] items-center justify-end pr-[9px] pb-[2px] text-[18px] text-[#dcdcdc]">
            <button>Clear</button>
          </div>
        </div>
      </div>
    </section>
  );
}

export default function App() {
  return (
    <div className="flex h-screen flex-col overflow-hidden bg-[#212121] font-['Roboto',sans-serif] text-[19px] leading-normal select-none">
      <Gradients />
      <TitleBar />
      <MenuBar />
      <div className="flex min-h-0 flex-1 gap-[7px] px-px pt-[2px] pb-[2px]">
        <aside className="flex w-[285px] shrink-0 flex-col gap-[7px]">
          <ComponentsPanel />
          <MyBlueprintPanel />
        </aside>
        <main className="flex min-w-0 flex-1 flex-col">
          <Toolbar />
          <div className="mt-2 flex gap-[2px] overflow-hidden pl-[6px]">
            <PanelTab state="idle" icon={<ViewportIcon />} label="Viewport" />
            <PanelTab state="idle" icon={<FIcon />} label="Construction Script" />
            <PanelTab state="idle" icon={<GraphIcon />} label="Event Graph" />
            <PanelTab state="active" icon={<FIcon />} label="Get Crystal to Actor" />
            <PanelTab state="idle" icon={<FIcon />} label="Swiatlo" />
            <PanelTab state="idle" icon={<FIcon />} label="Set Actor Location" />
          </div>
          <section className="mb-[7px] flex min-h-0 flex-1 flex-col border-[3px] border-[#606060]">
            <div className="relative flex-1">
              <Canvas />
              <Breadcrumbs />
            </div>
          </section>
          <CompilerResults />
        </main>
        <aside className="flex w-16 shrink-0 flex-col">
          <div className="flex items-center gap-[1px] pl-[6px]">
            <button aria-label="Details" className="flex h-8 w-[50px] shrink-0 items-center rounded-t-[4px] bg-[#606060] pl-2">
              <svg viewBox="0 0 26 26" className="h-[26px] w-[26px]" aria-hidden="true">
                <ellipse cx="14" cy="22" rx="10" ry="3" fill="#222" />
                <path d="M17 17 L24 24" stroke="#4a6cc4" strokeWidth="3.4" />
                <circle cx="11" cy="11" r="9" fill="#5a5f6c" stroke="#5478d8" strokeWidth="2" />
                <path d="M9 10 H12.4 V15 M8.6 15.4 H14.4" stroke="#fff" strokeWidth="2" fill="none" />
                <circle cx="11.4" cy="6.4" r="1.5" fill="#fff" />
              </svg>
            </button>
            <CloseX label="Details" />
          </div>
          <div className="flex-1 bg-[#606060]" />
        </aside>
      </div>
    </div>
  );
}
